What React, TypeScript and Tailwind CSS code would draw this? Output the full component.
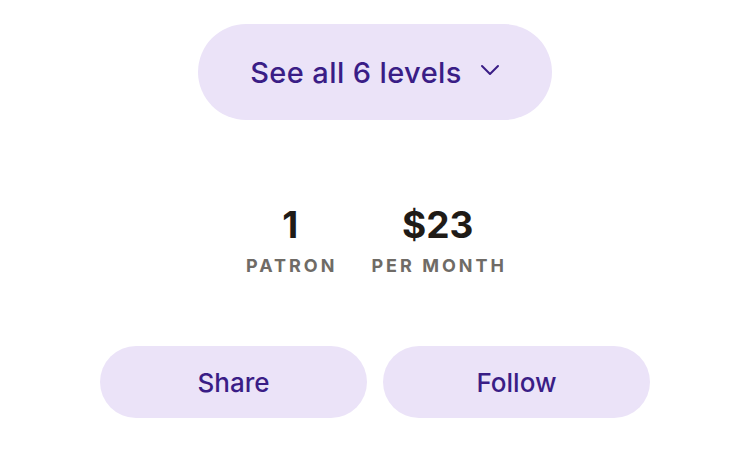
export default function App() {
  return (
    <div className="w-[750px] h-[464px] bg-white flex flex-col items-center font-['Inter','Liberation_Sans',Arial,sans-serif]">
      {/* Levels toggle */}
      <button className="mt-[24px] w-[354px] h-[96px] rounded-full bg-[#ebe3f8] text-[#3a1d86] flex items-center justify-center gap-[18px] text-[29px] font-medium tracking-[0.4px]">
        <span className="mb-[-2px]">See all 6 levels</span>
        <svg width="20" height="12" viewBox="0 0 20 12" fill="none" className="mt-[-4px]">
          <path d="M2 2L10 10L18 2" stroke="#3a1d86" strokeWidth="2" strokeLinecap="round" strokeLinejoin="round" />
        </svg>
      </button>

      {/* Stats */}
      <div className="mt-[84px] flex gap-[31px]">
        <div className="flex flex-col items-center">
          <span className="text-[37px] leading-[42px] font-bold text-[#1f1b17]">1</span>
          <span className="mt-[10px] ml-[3px] text-[18px] leading-[20px] font-bold tracking-[3px] text-[#6f6b66]">PATRON</span>
        </div>
        <div className="flex flex-col items-center">
          <span className="text-[37px] leading-[42px] font-bold text-[#1f1b17]">$23</span>
          <span className="mt-[10px] ml-[3px] text-[18px] leading-[20px] font-bold tracking-[3px] text-[#6f6b66]">PER MONTH</span>
        </div>
      </div>

      {/* Actions */}
      <div className="mt-[70px] flex gap-[16px]">
        <button className="w-[267px] h-[72px] rounded-full bg-[#ebe3f8] text-[#3a1d86] text-[26px] font-medium">Share</button>
        <button className="w-[267px] h-[72px] rounded-full bg-[#ebe3f8] text-[#3a1d86] text-[26px] font-medium">Follow</button>
      </div>
    </div>
  );
}
